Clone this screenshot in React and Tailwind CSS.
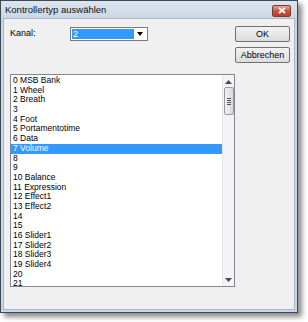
import React from "react";

const items = [
  "0 MSB Bank", "1 Wheel", "2 Breath", "3", "4 Foot", "5 Portamentotime", "6 Data",
  "7 Volume", "8", "9", "10 Balance", "11 Expression", "12 Effect1", "13 Effect2",
  "14", "15", "16 Slider1", "17 Slider2", "18 Slider3", "19 Slider4", "20", "21",
];

const font = { fontFamily: '"Liberation Sans", Arial, sans-serif' };

function Btn({ children }) {
  return (
    <div className="w-[55px] h-[16px] border border-[#707070] rounded-[2px] bg-gradient-to-b from-[#f2f2f2] to-[#dcdcdc] flex items-center justify-center text-[9px] text-black leading-none">
      {children}
    </div>
  );
}

export default function App() {
  return (
    <div className="w-[308px] h-[322px] bg-white" style={font}>
      <div className="w-[298px] h-[313px] border border-[#3c4a58] bg-[#c9d7e6] shadow-[4px_4px_5px_rgba(0,0,0,0.45)] flex flex-col">
        {/* title bar */}
        <div className="h-[17px] flex items-center justify-between pl-[4px] pr-[6px] bg-gradient-to-b from-[#dde5ee] to-[#cbd7e4]">
          <span className="text-[9.5px] text-[#111] leading-none">Kontrollertyp auswählen</span>
          <div className="w-[19px] h-[12px] mt-[2px] rounded-[2px] border border-[#7b3a30] bg-gradient-to-b from-[#e8a493] via-[#c9523e] to-[#b8402f] flex items-center justify-center">
            <svg width="8" height="7" viewBox="0 0 8 7">
              <path d="M1 1 L7 6 M7 1 L1 6" stroke="#fff" strokeWidth="1.8" />
            </svg>
          </div>
        </div>
        {/* client */}
        <div className="flex-1 mx-[2px] mb-[2px] border border-[#a7b6c8] bg-[#f0f0f0] flex">
          <div className="flex flex-col pl-[6px] pt-[8px]">
            <div className="flex items-start h-[15px]">
              <span className="w-[60px] text-[9px] leading-none mt-[2px]">Kanal:</span>
              <div className="w-[78px] h-[14px] border border-[#7a7a7a] bg-white flex p-[1px]">
                <div className="flex-1 bg-[#3399ff] text-white text-[9px] leading-[10px] pl-[1px]">2</div>
                <div className="w-[12px] flex items-center justify-center">
                  <svg width="6" height="4" viewBox="0 0 6 4">
                    <path d="M0 0 H6 L3 4 Z" fill="#000" />
                  </svg>
                </div>
              </div>
            </div>
            <div className="mt-[32px] w-[225px] h-[213px] border border-[#828790] bg-white flex">
              <div className="flex-1 flex flex-col pt-[1px]">
                {items.map((t, i) => (
                  <div
                    key={i}
                    className={
                      "h-[9.7px] text-[8.5px] leading-[9.7px] pl-[2px] whitespace-nowrap " +
                      (i === 7 ? "bg-[#3399ff] text-white" : "text-black")
                    }
                  >
                    {t}
                  </div>
                ))}
              </div>
              <div className="w-[12px] bg-[#f4f4f4] border-l border-[#e6e6e6] flex flex-col items-center">
                <svg width="7" height="4" viewBox="0 0 7 4" className="mt-[5px]">
                  <path d="M0 4 H7 L3.5 0 Z" fill="#4a4a4a" />
                </svg>
                <div className="mt-[3px] w-[10px] h-[28px] border border-[#9a9a9a] rounded-[2px] bg-gradient-to-r from-[#f2f2f2] to-[#d8d8d8] flex flex-col items-center justify-center gap-[1px]">
                  <div className="w-[4px] h-[1px] bg-[#555]" />
                  <div className="w-[4px] h-[1px] bg-[#555]" />
                  <div className="w-[4px] h-[1px] bg-[#555]" />
                  <div className="w-[4px] h-[1px] bg-[#555]" />
                </div>
                <div className="flex-1" />
                <svg width="7" height="4" viewBox="0 0 7 4" className="mb-[4px]">
                  <path d="M0 0 H7 L3.5 4 Z" fill="#4a4a4a" />
                </svg>
              </div>
            </div>
          </div>
          <div className="ml-auto mr-[8px] pt-[7px] flex flex-col gap-[5px]">
            <Btn>OK</Btn>
            <Btn>Abbrechen</Btn>
          </div>
        </div>
      </div>
    </div>
  );
}
